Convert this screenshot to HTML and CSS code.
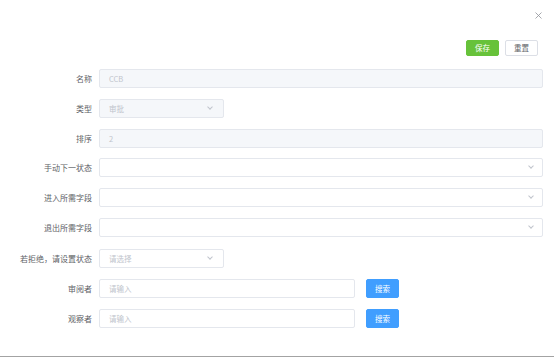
FILE: index.html
```html
<!DOCTYPE html>
<html lang="zh">
<head>
    <meta charset="UTF-8">
    <meta name="viewport" content="width=device-width, initial-scale=1.0">
    <title>状态编辑</title>
    <link rel="stylesheet" href="styles.css">
</head>
<body>
    <div class="dialog">
        <div class="dialog-header">
            <span class="close">
                <svg width="7" height="7" viewBox="0 0 7 7"><path d="M0.5 0.5L6.5 6.5M6.5 0.5L0.5 6.5" stroke="#909399" stroke-width="0.8" fill="none"/></svg>
            </span>
        </div>

        <div class="toolbar">
            <button class="btn btn-success">保存</button>
            <button class="btn btn-default">重置</button>
        </div>

        <form class="form">
            <div class="form-item">
                <label class="form-label">名称</label>
                <div class="input is-disabled"><span class="value">CCB</span></div>
            </div>
            <div class="form-item">
                <label class="form-label">类型</label>
                <div class="input select short is-disabled"><span class="value">审批</span><i class="arrow"></i></div>
            </div>
            <div class="form-item">
                <label class="form-label">排序</label>
                <div class="input is-disabled"><span class="value">2</span></div>
            </div>
            <div class="form-item">
                <label class="form-label">手动下一状态</label>
                <div class="input select"><span class="value"></span><i class="arrow"></i></div>
            </div>
            <div class="form-item">
                <label class="form-label">进入所需字段</label>
                <div class="input select"><span class="value"></span><i class="arrow"></i></div>
            </div>
            <div class="form-item">
                <label class="form-label">退出所需字段</label>
                <div class="input select"><span class="value"></span><i class="arrow"></i></div>
            </div>
            <div class="form-item">
                <label class="form-label">若拒绝，请设置状态</label>
                <div class="input select short"><span class="placeholder">请选择</span><i class="arrow"></i></div>
            </div>
            <div class="form-item">
                <label class="form-label">审阅者</label>
                <div class="input medium"><span class="placeholder">请输入</span></div>
                <button type="button" class="btn btn-primary">搜索</button>
            </div>
            <div class="form-item">
                <label class="form-label">观察者</label>
                <div class="input medium"><span class="placeholder">请输入</span></div>
                <button type="button" class="btn btn-primary">搜索</button>
            </div>
        </form>
    </div>
</body>
</html>
```

FILE: styles.css
```css
* {
    margin: 0;
    padding: 0;
    box-sizing: border-box;
}

body {
    font-family: "Noto Sans CJK SC", "Noto Sans", sans-serif;
    background: #fff;
    color: #606266;
    height: 357px;
    overflow: hidden;
}

.dialog {
    height: 357px;
    border-bottom: 1px solid #a3a3a3;
}

/* Cabecera */
.dialog-header {
    height: 40px;
    display: flex;
    justify-content: flex-end;
    padding: 12px 12px 0 0;
}

.close {
    width: 7px;
    height: 7px;
    display: flex;
}

/* Botones */
.toolbar {
    display: flex;
    justify-content: flex-end;
    gap: 6px;
    padding-right: 16px;
    height: 29px;
}

.btn {
    width: 33px;
    height: 16px;
    border-radius: 2px;
    font-family: inherit;
    font-size: 7.5px;
    line-height: 14px;
    border: 1px solid transparent;
    cursor: pointer;
}

.btn-success {
    background: #67c23a;
    border-color: #67c23a;
    color: #fff;
}

.btn-default {
    background: #fff;
    border-color: #dcdfe6;
    color: #606266;
}

.btn-primary {
    width: 33px;
    height: 19px;
    line-height: 17px;
    background: #409eff;
    border-color: #409eff;
    color: #fff;
    margin-left: 11px;
}

/* Formulario */
.form {
    display: flex;
    flex-direction: column;
    gap: 11px;
    padding-right: 11px;
}

.form-item {
    display: flex;
    align-items: center;
    height: 19px;
}

.form-item:nth-child(4) {
    margin-top: -1px;
}

.form-item:nth-child(7) {
    margin-top: 1px;
}

.form-label {
    width: 99px;
    flex-shrink: 0;
    text-align: right;
    padding-right: 7px;
    font-size: 8px;
    color: #606266;
    white-space: nowrap;
}

.input {
    flex: 1;
    height: 19px;
    border: 1px solid #e4e7ed;
    border-radius: 2px;
    background: #fff;
    display: flex;
    align-items: center;
    padding: 0 8px 0 9px;
    font-size: 7.5px;
}

.input.short {
    flex: none;
    width: 125px;
    padding-right: 10px;
}

.input.medium {
    flex: none;
    width: 256px;
}

.input.is-disabled {
    background: #f5f7fa;
    border-color: #e4e7ed;
}

.value {
    flex: 1;
    color: #c0c4cc;
}

.placeholder {
    flex: 1;
    color: #c0c4cc;
}

.arrow {
    width: 4px;
    height: 4px;
    border-right: 1px solid #c0c4cc;
    border-bottom: 1px solid #c0c4cc;
    transform: rotate(45deg);
    margin: -3px 1px 0 0;
}
```
